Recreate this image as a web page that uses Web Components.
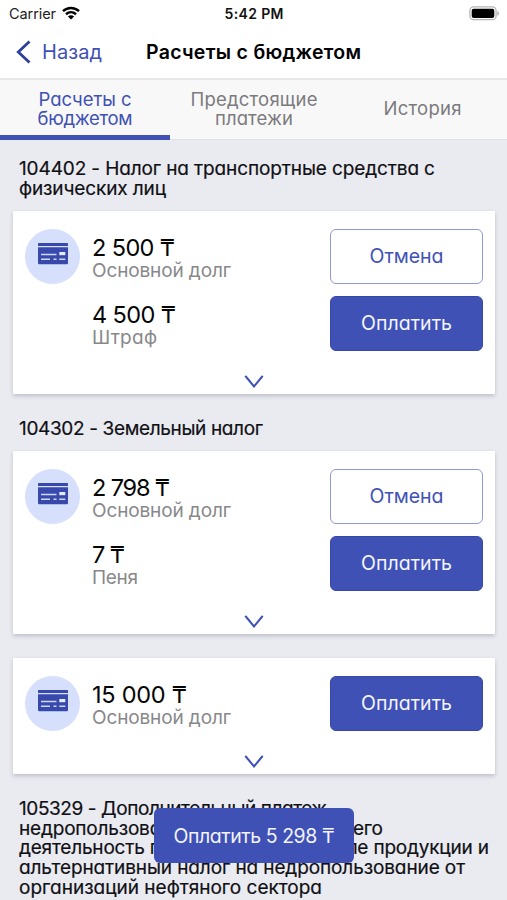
<!DOCTYPE html>
<html lang="ru">
<head>
<meta charset="utf-8">
<title>Расчеты с бюджетом</title>
<style>
html, body { margin: 0; height: 900px; overflow: hidden; }
body { background: #eaeaf1; font-family: Inter, "Noto Sans", sans-serif; font-feature-settings: "cv11"; color: #101014; --brand: #3f51b5; }
</style>
</head>
<body>
<tax-app></tax-app>
<script>
const define = (name, html, setup) => customElements.define(name, class extends HTMLElement {
  connectedCallback() {
    if (this.shadowRoot) return;
    const t = document.createElement('template');
    t.innerHTML = html;
    this.attachShadow({ mode: 'open' }).append(t.content.cloneNode(true));
    if (setup) setup(this, this.shadowRoot);
  }
});

// One line of text, tracked so that it spans the width given in "w".
define('fit-text', `<style>
:host { display: block; white-space: pre; width: max-content; }
span { display: inline-block; }
</style><span><slot></slot></span>`, (el, root) => {
  const span = root.querySelector('span');
  const w = +el.getAttribute('w');
  const n = el.textContent.length;
  const gap = (w - span.getBoundingClientRect().width) / (n - 1);
  span.style.letterSpacing = gap.toFixed(3) + 'px';
  span.style.marginRight = (-gap).toFixed(3) + 'px';
});

define('status-bar', `<style>
:host { display: grid; grid-template-columns: 1fr auto 1fr; align-items: center; height: 27px; padding: 0 7px 0 9px; font-size: 14.5px; color: #222; font-feature-settings: normal; }
.l { display: flex; align-items: center; gap: 6px; }
.t { font-weight: 600; color: #111; font-size: 14px; margin-right: 1px; }
.b { justify-self: end; display: block; margin-top: -1px; }
svg { display: block; }
</style>
<div class="l"><fit-text w="47">Carrier</fit-text>
<svg width="18" height="14" viewBox="0 0 18 14" fill="none" stroke="#000" stroke-width="2.5" style="margin-top:-2px"><path d="M1 5.1C5.5.8 12.5.8 17 5.1"/><path d="M4 8.2c2.9-2.6 7.1-2.6 10 0"/><path d="M9 13.4 5.9 10.5c1.8-1.6 4.4-1.6 6.2 0z" fill="#000" stroke="none"/></svg></div>
<fit-text class="t" w="59">5:42 PM</fit-text>
<svg class="b" width="31" height="15" viewBox="0 0 31 15"><rect x=".9" y=".9" width="26.2" height="12.8" rx="3.8" fill="#fff" stroke="#b4b4b4" stroke-width="1.3"/><rect x="2.7" y="2.7" width="22.6" height="9.3" rx="2" fill="#000"/><path d="M28.4 5v4.8c2-.7 2-4.1 0-4.8z" fill="#aaa"/></svg>`);

define('nav-bar', `<style>
:host { display: grid; grid-template-columns: 1fr auto 1fr; align-items: center; box-sizing: border-box; height: 53px; padding: 0 16px 1px; font-size: 20px; border-bottom: 2px solid #e8e8eb; font-feature-settings: normal; }
.l { display: flex; align-items: center; gap: 11px; color: var(--brand); }
.t { font-weight: 600; color: #000; font-size: 19.5px; }
svg { display: block; }
</style>
<div class="l"><svg width="15" height="24" viewBox="0 0 15 24" fill="none" stroke="#2f3f9e" stroke-width="2.8"><path d="M13.5 1.5 2.3 12l11.2 10.5"/></svg><fit-text w="60">Назад</fit-text></div>
<fit-text class="t" w="215">Расчеты с бюджетом</fit-text><span></span>`);

define('tab-item', `<style>
:host { display: flex; flex-direction: column; align-items: center; justify-content: center; box-sizing: border-box; height: 60px; padding-bottom: 1px; line-height: 19.5px; font-size: 18.5px; color: #7b7b7e; border-bottom: 1px solid #dfdfe6; }
:host([active]) { color: var(--brand); border-bottom: 5px solid var(--brand); padding: 3px 0 0; }
</style><slot></slot>`);

define('tab-bar', `<style>
:host { display: grid; grid-template-columns: 170px 168px 169px; background: #f8f8f8; }
</style><slot></slot>`);

define('section-title', `<style>
:host { display: block; padding: 25px 19px 12px; font-size: 19px; line-height: 19.8px; font-weight: 400; -webkit-text-stroke: .2px #101014; }
</style><slot></slot>`);

define('action-button', `<style>
:host { display: flex; align-items: center; justify-content: center; box-sizing: border-box; width: 153px; height: 55px; padding-bottom: 1px; border: 1px solid #3848a8; border-radius: 6px; background: var(--brand); color: #f3f4ff; font-size: 19.5px; }
:host([outline]) { background: #fff; color: var(--brand); border: 1.5px solid #8f9ad0; }
</style><slot></slot>`);

define('debt-line', `<style>
:host { display: grid; grid-template-columns: 55px 1fr 153px; column-gap: 12px; height: 55px; }
.icon { width: 55px; height: 55px; border-radius: 50%; background: #d6e0fc; display: none; align-items: center; justify-content: center; }
:host([icon]) .icon { display: flex; }
.text { grid-column: 2; padding-top: 5px; }
.sum { font-size: 23.5px; line-height: 28px; color: #050505; }
.label { font-size: 19px; line-height: 20px; margin-top: -1px; color: #88888a; }
.act { grid-column: 3; }
.icon, .text, .act { grid-row: 1; }
svg { display: block; margin-top: -4px; }
</style>
<div class="icon"><svg width="32" height="22" viewBox="0 0 32 22"><path d="M1.8 0h28.4q.8 0 .8.8V3H1V.8Q1 0 1.8 0zM1 4.300h30V20q0 1.200-1.200 1.200H2.200Q1 21.200 1 20z" fill="#3949ab"/><path d="M4 11.500h15.500M4 16.300h9M16.500 16.300h3M22.300 16.300h6" stroke="#cbd7fb" stroke-width="1.500"/><rect x="22.300" y="9" width="6" height="3.200" fill="#e3eafe"/></svg></div>
<div class="text"><div class="sum"><slot name="sum"></slot></div><div class="label"><slot name="label"></slot></div></div>
<div class="act"><slot></slot></div>`);

define('debt-card', `<style>
:host { display: flex; flex-direction: column; gap: 12px; box-sizing: border-box; margin: 0 12px 0 13px; padding: 18px 12px 5px; background: #fff; border-radius: 1px; box-shadow: 0 2px 4px rgba(40,40,70,.22); }
:host([spaced]) { margin-top: 24px; }
svg { display: block; margin: 12px auto 0; }
.more { height: 26px; }
</style><slot></slot><div class="more"><svg width="20" height="14" viewBox="0 0 20 14" fill="none" stroke="#3f51b5" stroke-width="2" stroke-linecap="round"><path d="M1.800 1.500 10 11.500l8.200-10"/></svg></div>`);

define('pay-total', `<style>
:host { position: fixed; left: 154px; top: 808px; width: 200px; height: 55px; box-sizing: border-box; display: flex; align-items: center; justify-content: center; border-radius: 6px; background: var(--brand); color: #f3f4ff; font-size: 19.500px; }
</style><slot></slot>`);

define('tax-app', `<style>
:host { display: block; }
header { background: #fff; }
.first { padding-top: 19px; padding-bottom: 12px; }
.second { padding-bottom: 12.500px; }
</style>
<header><status-bar></status-bar><nav-bar></nav-bar></header>
<tab-bar>
<tab-item active><fit-text w="93">Расчеты с</fit-text><fit-text w="95">бюджетом</fit-text></tab-item>
<tab-item><fit-text w="127">Предстоящие</fit-text><fit-text w="78">платежи</fit-text></tab-item>
<tab-item><fit-text w="78">История</fit-text></tab-item>
</tab-bar>
<section-title class="first"><fit-text w="416">104402 - Налог на транспортные средства с</fit-text><fit-text w="147">физических лиц</fit-text></section-title>
<debt-card>
<debt-line icon><fit-text slot="sum" w="83">2 500 ₸</fit-text><fit-text slot="label" w="139">Основной долг</fit-text><action-button outline><fit-text w="74">Отмена</fit-text></action-button></debt-line>
<debt-line><fit-text slot="sum" w="84">4 500 ₸</fit-text><fit-text slot="label" w="65">Штраф</fit-text><action-button><fit-text w="91">Оплатить</fit-text></action-button></debt-line>
</debt-card>
<section-title class="second"><fit-text w="244">104302 - Земельный налог</fit-text></section-title>
<debt-card>
<debt-line icon><fit-text slot="sum" w="78">2 798 ₸</fit-text><fit-text slot="label" w="139">Основной долг</fit-text><action-button outline><fit-text w="74">Отмена</fit-text></action-button></debt-line>
<debt-line><fit-text slot="sum" w="33">7 ₸</fit-text><fit-text slot="label" w="46">Пеня</fit-text><action-button><fit-text w="91">Оплатить</fit-text></action-button></debt-line>
</debt-card>
<debt-card spaced>
<debt-line icon><fit-text slot="sum" w="95">15 000 ₸</fit-text><fit-text slot="label" w="139">Основной долг</fit-text><action-button><fit-text w="91">Оплатить</fit-text></action-button></debt-line>
</debt-card>
<section-title><fit-text w="308">105329 - Дополнительный платеж</fit-text><fit-text w="364">недропользователя, осуществляющего</fit-text><fit-text w="470">деятельность по контракту о разделе продукции и</fit-text><fit-text w="446">альтернативный налог на недропользование от</fit-text><fit-text w="303">организаций нефтяного сектора</fit-text></section-title>
<pay-total><fit-text w="161">Оплатить 5 298 ₸</fit-text></pay-total>`);
</script>
</body>
</html>
